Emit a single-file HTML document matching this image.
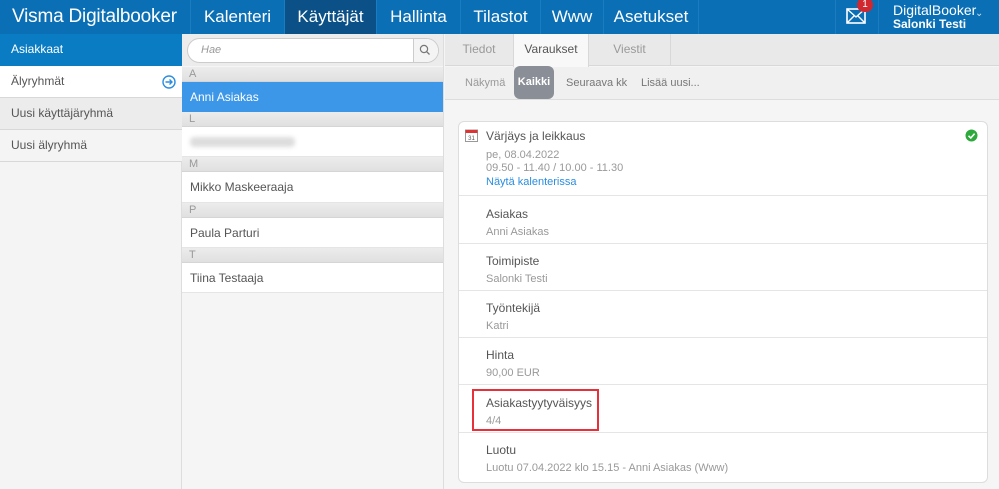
<!DOCTYPE html>
<html><head><meta charset="utf-8"><style>
*{box-sizing:border-box;margin:0;padding:0}
body{width:999px;height:489px;overflow:hidden;font-family:"Liberation Sans",sans-serif;background:#f5f5f5;position:relative;color:#555}
.a{position:absolute}
.top{left:0;top:0;width:999px;height:34px;background:#0a6fb5}
.nav{top:0;height:34px;color:#fff;font-size:17px;line-height:33px;text-align:center;border-left:1px solid #1b7cc0}
.side{left:0;top:34px;width:182px;height:455px;background:#f4f4f4;border-right:1px solid #ddd}
.srow{left:0;width:182px;height:32px;font-size:12px;line-height:31px;padding-left:11px;border-bottom:1px solid #d8d8d8;color:#555;background:#f4f4f4}
.mid{left:182px;top:34px;width:262px;height:455px;background:#f5f5f5;border-right:1px solid #ddd}
.hdr{left:182px;width:261px;height:15px;background:linear-gradient(#ececec,#e0e0e0);font-size:11px;color:#999;padding-left:7px;line-height:14px;border-bottom:1px solid #d5d5d5}
.item{left:182px;width:261px;height:30px;background:#fff;font-size:12px;color:#555;padding-left:8px;line-height:30px;border-bottom:1px solid #e5e5e5}
.sec{left:459px;width:528px;border-top:1px solid #e5e5e5;padding-left:27px;font-size:12px;color:#555}
.sec div{font-size:11px;color:#999;margin-top:5px}
</style></head><body>
<div class="a top"></div>
<div class="a" style="left:12px;top:0;height:34px;line-height:33px;color:#fff;font-size:19px;letter-spacing:-0.2px">Visma Digitalbooker</div>
<div class="a nav" style="left:190px;width:94px">Kalenteri</div>
<div class="a nav" style="left:284px;width:92px;background:#0b5188">Käyttäjät</div>
<div class="a nav" style="left:376px;width:84px">Hallinta</div>
<div class="a nav" style="left:460px;width:80px">Tilastot</div>
<div class="a nav" style="left:540px;width:63px">Www</div>
<div class="a nav" style="left:603px;width:96px;border-right:1px solid #1b7cc0">Asetukset</div>
<div class="a nav" style="left:835px;width:44px;border-right:1px solid #1b7cc0"></div>
<svg class="a" style="left:846px;top:8px" width="20" height="16"><rect x="1" y="1" width="18" height="14" fill="none" stroke="#fff" stroke-width="1.6"/><path d="M1 1 L10 9 L19 1 M1 15 L8 8 M19 15 L12 8" fill="none" stroke="#fff" stroke-width="1.4"/></svg>
<div class="a" style="left:857px;top:-2px;width:16px;height:14px;border-radius:7px;background:#d0282e;color:#fff;font-size:10px;text-align:center;line-height:14px">1</div>
<div class="a" style="left:893px;top:2px;color:#fff;font-size:14px">DigitalBooker</div>
<div class="a" style="left:893px;top:17px;color:#fff;font-size:12px;font-weight:bold">Salonki Testi</div>
<div class="a" style="left:975px;top:8px;color:#cde;font-size:10px">&#8964;</div>

<div class="a side"></div>
<div class="a srow" style="top:34px;background:#0a7cc4;color:#fff;border-color:#0a7cc4">Asiakkaat</div>
<div class="a srow" style="top:66px;background:#fff">Älyryhmät</div>
<svg class="a" style="left:162px;top:75px" width="14" height="14"><circle cx="7" cy="7" r="6" fill="none" stroke="#2a8de0" stroke-width="1.4"/><path d="M3.5 7H10M7.5 4.5L10 7L7.5 9.5" fill="none" stroke="#2a8de0" stroke-width="1.4"/></svg>
<div class="a srow" style="top:98px;background:#ececec">Uusi käyttäjäryhmä</div>
<div class="a srow" style="top:130px">Uusi älyryhmä</div>

<div class="a mid"></div>
<div class="a" style="left:182px;top:34px;width:261px;height:32px;background:#ececec"></div>
<div class="a" style="left:187px;top:38px;width:252px;height:25px;background:#fff;border:1px solid #ccc;border-radius:13px"></div>
<div class="a" style="left:201px;top:44px;font-size:11px;color:#999;font-style:italic">Hae</div>
<div class="a" style="left:413px;top:39px;width:25px;height:23px;border-left:1px solid #ccc;background:#f4f4f4;border-radius:0 12px 12px 0"></div>
<svg class="a" style="left:419px;top:44px" width="12" height="12"><circle cx="5" cy="5" r="3.6" fill="none" stroke="#777" stroke-width="1.2"/><path d="M7.7 7.7L10.5 10.5" stroke="#777" stroke-width="1.3"/></svg>
<div class="a hdr" style="top:67px">A</div>
<div class="a item" style="top:82px;background:#3d97e8;color:#fff;border-color:#3d97e8">Anni Asiakas</div>
<div class="a hdr" style="top:112px">L</div>
<div class="a item" style="top:127px"><span style="display:inline-block;margin-top:10px;width:105px;height:10px;background:#ddd;border-radius:4px;filter:blur(2px);vertical-align:top"></span></div>
<div class="a hdr" style="top:157px">M</div>
<div class="a item" style="top:172px;height:31px">Mikko Maskeeraaja</div>
<div class="a hdr" style="top:203px">P</div>
<div class="a item" style="top:218px">Paula Parturi</div>
<div class="a hdr" style="top:248px">T</div>
<div class="a item" style="top:263px">Tiina Testaaja</div>

<div class="a" style="left:445px;top:34px;width:554px;height:32px;background:#e9e9e9;border-bottom:1px solid #d8d8d8"></div>
<div class="a" style="left:445px;top:34px;width:68px;height:32px;font-size:12px;color:#999;text-align:center;line-height:31px">Tiedot</div>
<div class="a" style="left:513px;top:34px;width:76px;height:33px;background:#f8f8f8;border-left:1px solid #d8d8d8;border-right:1px solid #d8d8d8;font-size:12px;color:#555;text-align:center;line-height:31px">Varaukset</div>
<div class="a" style="left:589px;top:34px;width:82px;height:32px;border-right:1px solid #d8d8d8;font-size:12px;color:#999;text-align:center;line-height:31px">Viestit</div>
<div class="a" style="left:445px;top:67px;width:554px;height:33px;background:#f0f0f0;border-bottom:1px solid #ddd"></div>
<div class="a" style="left:465px;top:77px;font-size:11px;color:#999">Näkymä</div>
<div class="a" style="left:514px;top:66px;width:40px;height:33px;background:#8a8e96;border-radius:6px;color:#fff;font-size:11px;font-weight:bold;text-align:center;line-height:33px">Kaikki</div>
<div class="a" style="left:566px;top:77px;font-size:11px;color:#777">Seuraava kk</div>
<div class="a" style="left:641px;top:77px;font-size:11px;color:#777">Lisää uusi...</div>

<div class="a" style="left:458px;top:121px;width:530px;height:362px;background:#fff;border:1px solid #ddd;border-radius:6px"></div>
<svg class="a" style="left:465px;top:128px" width="13" height="14"><rect x="0.5" y="2" width="12" height="11.5" fill="#fff" stroke="#999"/><rect x="0.5" y="2" width="12" height="3" fill="#d33"/><text x="6.5" y="12" font-size="6" text-anchor="middle" fill="#555" font-family="Liberation Sans">31</text></svg>
<div class="a" style="left:486px;top:129px;font-size:12px;color:#555">Värjäys ja leikkaus</div>
<div class="a" style="left:486px;top:149px;font-size:11px;color:#999;line-height:13px">pe, 08.04.2022<br>09.50 - 11.40 / 10.00 - 11.30</div>
<div class="a" style="left:486px;top:176px;font-size:11px;color:#2a8de0">Näytä kalenterissa</div>
<svg class="a" style="left:965px;top:129px" width="13" height="13"><circle cx="6.5" cy="6.5" r="6" fill="#2eaa3c"/><path d="M3.5 6.8L5.8 9L9.6 4.6" fill="none" stroke="#fff" stroke-width="1.6"/></svg>
<div class="a sec" style="top:195px;height:48px;padding-top:11px">Asiakas<div>Anni Asiakas</div></div>
<div class="a sec" style="top:243px;height:47px;padding-top:10px">Toimipiste<div>Salonki Testi</div></div>
<div class="a sec" style="top:290px;height:47px;padding-top:10px">Työntekijä<div>Katri</div></div>
<div class="a sec" style="top:337px;height:47px;padding-top:10px">Hinta<div>90,00 EUR</div></div>
<div class="a sec" style="top:384px;height:48px;padding-top:11px">Asiakastyytyväisyys<div>4/4</div></div>
<div class="a sec" style="top:432px;height:48px;padding-top:10px">Luotu<div>Luotu 07.04.2022 klo 15.15 - Anni Asiakas (Www)</div></div>
<div class="a" style="left:472px;top:389px;width:127px;height:42px;border:2px solid #e8303a"></div>
</body></html>
